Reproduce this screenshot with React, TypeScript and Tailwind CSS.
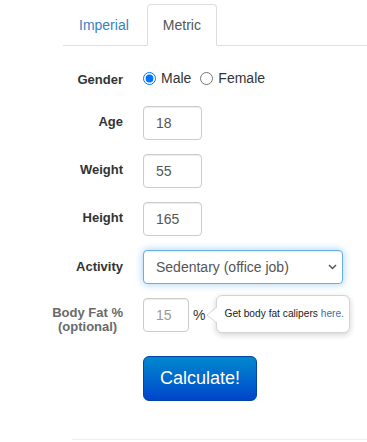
import { useState } from "react"

const LABEL = "w-[123px] shrink-0 text-right text-[13px] font-bold text-[#333]"
const INPUT = "h-[34px] rounded-[4px] border border-[#ccc] bg-white px-[12px] text-[14px] text-[#555] outline-none shadow-[inset_0_1px_1px_rgba(0,0,0,0.075)]"

export default function App() {
  const [tab, setTab] = useState<"imperial" | "metric">("metric")
  const [gender, setGender] = useState("male")

  return (
    <div className="w-[367px] h-[442px] overflow-hidden bg-white text-[#333]" style={{ fontFamily: '"Liberation Sans", Arial, sans-serif' }}>
      {/* Tabs */}
      <ul className="ml-[63px] flex pt-[4px] border-b border-[#ddd] text-[14px]">
        <li className="mr-[2px] -mb-px">
          <button
            onClick={() => setTab("imperial")}
            className={
              tab === "imperial"
                ? "block px-[15px] py-[10px] leading-[20px] rounded-t-[4px] border border-[#ddd] border-b-white bg-white text-[#555]"
                : "block px-[15px] py-[10px] leading-[20px] rounded-t-[4px] border border-transparent text-[#3a7fc4]"
            }
          >
            Imperial
          </button>
        </li>
        <li className="-mb-px">
          <button
            onClick={() => setTab("metric")}
            className={
              tab === "metric"
                ? "block px-[15px] py-[10px] leading-[20px] rounded-t-[4px] border border-[#ddd] border-b-white bg-white text-[#555]"
                : "block px-[15px] py-[10px] leading-[20px] rounded-t-[4px] border border-transparent text-[#3a7fc4]"
            }
          >
            Metric
          </button>
        </li>
      </ul>

      {/* Form */}
      <div className="flex flex-col">
        <div className="mt-[20px] flex h-[24px] items-center gap-[20px]">
          <div className={LABEL + " pt-[4px]"}>Gender</div>
          <div className="flex items-center text-[14px] text-[#333]">
            <label className="flex items-center">
              <input type="radio" name="g" checked={gender === "male"} onChange={() => setGender("male")} className="m-0 h-[13px] w-[13px] accent-[#0075ff]" />
              <span className="ml-[5px]">Male</span>
            </label>
            <label className="ml-[9px] flex items-center">
              <input type="radio" name="g" checked={gender === "female"} onChange={() => setGender("female")} className="m-0 h-[13px] w-[13px] accent-[#0075ff]" />
              <span className="ml-[5px]">Female</span>
            </label>
          </div>
        </div>

        <div className="mt-[16px] flex h-[34px] items-center gap-[20px]">
          <div className={LABEL + " pb-[3px]"}>Age</div>
          <input defaultValue="18" className={INPUT + " w-[59px]"} />
        </div>

        <div className="mt-[14px] flex h-[34px] items-center gap-[20px]">
          <div className={LABEL + " pb-[3px]"}>Weight</div>
          <input defaultValue="55" className={INPUT + " w-[59px]"} />
        </div>

        <div className="mt-[14px] flex h-[34px] items-center gap-[20px]">
          <div className={LABEL + " pb-[3px]"}>Height</div>
          <input defaultValue="165" className={INPUT + " w-[59px]"} />
        </div>

        <div className="mt-[14px] flex h-[34px] items-center gap-[20px]">
          <div className={LABEL}>Activity</div>
          <div className="relative">
            <select
              defaultValue="sedentary"
              className="h-[34px] w-[200px] appearance-none rounded-[4px] border border-[#66afe9] bg-white pl-[12px] pr-[24px] text-[14px] text-[#555] outline-none shadow-[inset_0_1px_1px_rgba(0,0,0,0.075),0_0_8px_rgba(102,175,233,0.6)]"
            >
              <option value="sedentary">Sedentary (office job)</option>
              <option value="light">Light Exercise (1-2 days/week)</option>
              <option value="moderate">Moderate Exercise (3-5 days/week)</option>
            </select>
            <svg className="pointer-events-none absolute right-[6px] top-[14px]" width="9" height="6" viewBox="0 0 9 6">
              <path d="M1 1l3.5 3.5L8 1" fill="none" stroke="#555" strokeWidth="1.5" />
            </svg>
          </div>
        </div>

        <div className="mt-[14px] flex h-[34px] items-center gap-[20px]">
          <div className="w-[123px] shrink-0 self-start pt-[8px] text-right">
            <span className="inline-block text-center text-[13px] font-bold leading-[14px] text-[#6a6a6a]">
              Body Fat %<br />(optional)
            </span>
          </div>
          <div className="flex items-center">
            <input defaultValue="15" className={INPUT + " w-[46px] text-[#999]"} />
            <span className="ml-[4px] text-[14px] text-[#333]">%</span>
            <div className="relative ml-[11px] -mt-[2px] flex h-[38px] items-center rounded-[6px] border border-[#d4d4d4] bg-white pl-[7px] pr-[5px] shadow-[0_2px_6px_rgba(0,0,0,0.18)]">
              <svg className="absolute left-[-11px] top-[10px]" width="12" height="18" viewBox="0 0 12 18">
                <path d="M11.5 0.5L1 9l10.5 8.5" fill="#fff" stroke="#d4d4d4" />
                <rect x="11" y="0" width="2" height="18" fill="#fff" />
              </svg>
              <span className="whitespace-nowrap text-[10.2px] text-[#222]">
                Get body fat calipers <span className="text-[#3a6fb0]">here.</span>
              </span>
            </div>
          </div>
        </div>

        <div className="mt-[24px] flex gap-[20px]">
          <div className="w-[123px] shrink-0" />
          <button className="h-[45px] w-[114px] rounded-[6px] border border-[#0044aa] bg-gradient-to-b from-[#0088cc] to-[#0044cc] text-[18px] text-white">
            Calculate!
          </button>
        </div>

        <div className="ml-[72px] mt-[38px] border-t border-[#eee]" />
      </div>
    </div>
  )
}
